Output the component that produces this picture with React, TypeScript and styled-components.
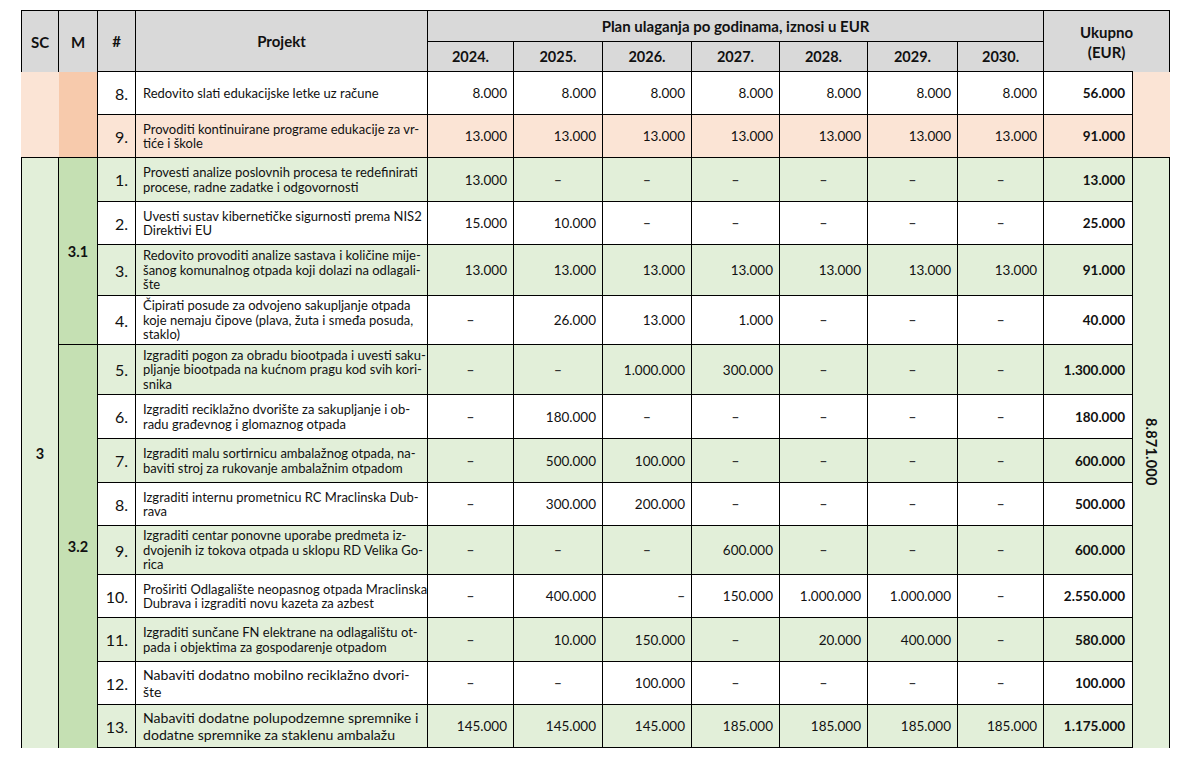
import React from "react";
import styled, { createGlobalStyle, css } from "styled-components";

const GlobalStyle = createGlobalStyle`
  html, body { margin: 0; padding: 0; background: #ffffff; }
  body { font-family: Lato, "Open Sans", sans-serif; color: #111; }
`;

const C = {
  head: "#d9d9d9",
  peach: "#fbe4d5",
  peachDark: "#f7caac",
  green: "#e2efd9",
  greenDark: "#c5e0b3",
  white: "#ffffff",
  line: "#000000",
};

type Tone = "white" | "peach" | "green";
const toneBg = (t: Tone) => (t === "peach" ? C.peach : t === "green" ? C.green : C.white);

const Page = styled.div`
  padding: 10px 0 0 21px;
`;

const Table = styled.table`
  border-collapse: separate;
  border-spacing: 0;
  table-layout: fixed;
  width: 1149px;
`;

const Col = styled.col<{ $w: number }>`
  width: ${(p) => p.$w}px;
`;

type Borders = { $l?: boolean; $t?: boolean; $r?: boolean; $b?: boolean };
const borders = css<Borders>`
  border-left: ${(p) => (p.$l ? `1px solid ${C.line}` : "none")};
  border-top: ${(p) => (p.$t ? `1px solid ${C.line}` : "none")};
  border-right: ${(p) => (p.$r ? `1px solid ${C.line}` : "none")};
  border-bottom: ${(p) => (p.$b ? `1px solid ${C.line}` : "none")};
`;

const Row = styled.tr<{ $h: number; $tone?: Tone }>`
  height: ${(p) => p.$h}px;
  background: ${(p) => toneBg(p.$tone ?? "white")};
`;

const HeadCell = styled.th<Borders & { $underline?: number; $small?: boolean }>`
  ${borders}
  box-sizing: border-box;
  background: ${C.head};
  font-weight: 700;
  font-size: ${(p) => (p.$small ? 14.5 : 15)}px;
  line-height: 20px;
  text-align: center;
  vertical-align: middle;
  padding: 0;
  ${(p) =>
    p.$underline
      ? css`
          background-image: linear-gradient(${C.line}, ${C.line});
          background-repeat: no-repeat;
          background-position: left bottom;
          background-size: ${p.$underline}px 1px;
        `
      : ""}
`;

const GroupCell = styled.td<Borders & { $bg: string }>`
  ${borders}
  background: ${(p) => p.$bg};
  font-weight: 700;
  font-size: 14.5px;
  text-align: center;
  vertical-align: middle;
  padding: 0;
`;

const IdxCell = styled.td`
  border-right: 1px solid ${C.line};
  border-bottom: 1px solid ${C.line};
  font-size: 16px;
  text-align: right;
  vertical-align: middle;
  padding: 0 7px 0 0;
`;

const ProjectCell = styled.td<{ $big?: boolean }>`
  border-right: 1px solid ${C.line};
  border-bottom: 1px solid ${C.line};
  font-size: ${(p) => (p.$big ? 14.1 : 13)}px;
  line-height: ${(p) => (p.$big ? 17 : 14.5)}px;
  text-align: left;
  vertical-align: middle;
  padding: 0 0 0 7px;
  white-space: nowrap;
  overflow: hidden;
`;

const Line = styled.span`
  display: block;
`;

const NumCell = styled.td<{ $center?: boolean; $dash?: boolean }>`
  border-right: 1px solid ${C.line};
  border-bottom: 1px solid ${C.line};
  font-size: 13.5px;
  font-weight: ${(p) => (p.$dash ? 700 : 400)};
  color: ${(p) => (p.$dash ? "#333" : "#111")};
  text-align: ${(p) => (p.$center ? "center" : "right")};
  vertical-align: middle;
  padding: ${(p) => (p.$center ? "0" : "0 6px 0 0")};
  white-space: nowrap;
`;

const SumCell = styled.td`
  border-right: 1px solid ${C.line};
  border-bottom: 1px solid ${C.line};
  font-size: 13.5px;
  font-weight: 700;
  text-align: right;
  vertical-align: middle;
  padding: 0 7px 0 0;
  white-space: nowrap;
`;

const GrandCell = styled.td<Borders & { $bg: string }>`
  ${borders}
  background: ${(p) => p.$bg};
  vertical-align: middle;
  text-align: center;
  padding: 0;
`;

const Vertical = styled.span`
  display: inline-block;
  writing-mode: vertical-rl;
  font-weight: 700;
  font-size: 14.5px;
  letter-spacing: 0.2px;
`;

type Item = {
  idx: string;
  lines: string[];
  vals: string[];
  sum: string;
  h: number;
  tone: Tone;
  big?: boolean;
  rightDash?: number[];
};

const D = "–";

const peachItems: Item[] = [
  {
    idx: "8.",
    lines: ["Redovito slati edukacijske letke uz račune"],
    vals: ["8.000", "8.000", "8.000", "8.000", "8.000", "8.000", "8.000"],
    sum: "56.000",
    h: 43,
    tone: "white",
  },
  {
    idx: "9.",
    lines: ["Provoditi kontinuirane programe edukacije za vr-", "tiće i škole"],
    vals: ["13.000", "13.000", "13.000", "13.000", "13.000", "13.000", "13.000"],
    sum: "91.000",
    h: 43,
    tone: "peach",
  },
];

const greenItems: Item[] = [
  {
    idx: "1.",
    lines: ["Provesti analize poslovnih procesa te redefinirati", "procese, radne zadatke i odgovornosti"],
    vals: ["13.000", D, D, D, D, D, D],
    sum: "13.000",
    h: 44,
    tone: "green",
  },
  {
    idx: "2.",
    lines: ["Uvesti sustav kibernetičke sigurnosti prema NIS2", "Direktivi EU"],
    vals: ["15.000", "10.000", D, D, D, D, D],
    sum: "25.000",
    h: 43,
    tone: "white",
  },
  {
    idx: "3.",
    lines: [
      "Redovito provoditi analize sastava i količine mije-",
      "šanog komunalnog otpada koji dolazi na odlagali-",
      "šte",
    ],
    vals: ["13.000", "13.000", "13.000", "13.000", "13.000", "13.000", "13.000"],
    sum: "91.000",
    h: 51,
    tone: "green",
  },
  {
    idx: "4.",
    lines: [
      "Čipirati posude za odvojeno sakupljanje otpada",
      "koje nemaju čipove (plava, žuta i smeđa posuda,",
      "staklo)",
    ],
    vals: [D, "26.000", "13.000", "1.000", D, D, D],
    sum: "40.000",
    h: 49,
    tone: "white",
  },
  {
    idx: "5.",
    lines: [
      "Izgraditi pogon za obradu biootpada i uvesti saku-",
      "pljanje biootpada na kućnom pragu kod svih kori-",
      "snika",
    ],
    vals: [D, D, "1.000.000", "300.000", D, D, D],
    sum: "1.300.000",
    h: 50,
    tone: "green",
  },
  {
    idx: "6.",
    lines: ["Izgraditi reciklažno dvorište za sakupljanje i ob-", "radu građevnog i glomaznog otpada"],
    vals: [D, "180.000", D, D, D, D, D],
    sum: "180.000",
    h: 44,
    tone: "white",
  },
  {
    idx: "7.",
    lines: ["Izgraditi malu sortirnicu ambalažnog otpada, na-", "baviti stroj za rukovanje ambalažnim otpadom"],
    vals: [D, "500.000", "100.000", D, D, D, D],
    sum: "600.000",
    h: 44,
    tone: "green",
  },
  {
    idx: "8.",
    lines: ["Izgraditi internu prometnicu RC Mraclinska Dub-", "rava"],
    vals: [D, "300.000", "200.000", D, D, D, D],
    sum: "500.000",
    h: 43,
    tone: "white",
  },
  {
    idx: "9.",
    lines: [
      "Izgraditi centar ponovne uporabe predmeta iz-",
      "dvojenih iz tokova otpada u sklopu RD Velika Go-",
      "rica",
    ],
    vals: [D, D, D, "600.000", D, D, D],
    sum: "600.000",
    h: 49,
    tone: "green",
  },
  {
    idx: "10.",
    lines: ["Proširiti Odlagalište neopasnog otpada Mraclinska", "Dubrava i izgraditi novu kazeta za azbest"],
    vals: [D, "400.000", D, "150.000", "1.000.000", "1.000.000", D],
    sum: "2.550.000",
    h: 43,
    tone: "white",
    rightDash: [2],
  },
  {
    idx: "11.",
    lines: ["Izgraditi sunčane FN elektrane na odlagalištu ot-", "pada i objektima za gospodarenje otpadom"],
    vals: [D, "10.000", "150.000", D, "20.000", "400.000", D],
    sum: "580.000",
    h: 44,
    tone: "green",
  },
  {
    idx: "12.",
    lines: ["Nabaviti dodatno mobilno reciklažno dvori-", "šte"],
    vals: [D, D, "100.000", D, D, D, D],
    sum: "100.000",
    h: 43,
    tone: "white",
    big: true,
  },
  {
    idx: "13.",
    lines: ["Nabaviti dodatne polupodzemne spremnike i", "dodatne spremnike za staklenu ambalažu"],
    vals: ["145.000", "145.000", "145.000", "185.000", "185.000", "185.000", "185.000"],
    sum: "1.175.000",
    h: 43,
    tone: "green",
    big: true,
  },
];

const widths = [38, 39, 38, 292, 86, 89, 89, 88, 88, 90, 86, 89, 37];
const years = ["2024.", "2025.", "2026.", "2027.", "2028.", "2029.", "2030."];

const ItemCells: React.FC<{ item: Item }> = ({ item }) => (
  <>
    <IdxCell>{item.idx}</IdxCell>
    <ProjectCell $big={item.big}>
      {item.lines.map((l, i) => (
        <Line key={i}>{l}</Line>
      ))}
    </ProjectCell>
    {item.vals.map((v, i) => (
      <NumCell
        key={i}
        $dash={v === D}
        $center={v === D && !(item.rightDash ?? []).includes(i)}
      >
        {v}
      </NumCell>
    ))}
    <SumCell>{item.sum}</SumCell>
  </>
);

export default function App() {
  return (
    <>
      <GlobalStyle />
      <Page>
        <Table>
          <colgroup>
            {widths.map((w, i) => (
              <Col key={i} $w={w} />
            ))}
          </colgroup>
          <thead>
            <Row $h={32}>
              <HeadCell rowSpan={2} $l $t $r>
                SC
              </HeadCell>
              <HeadCell rowSpan={2} $t $r>
                M
              </HeadCell>
              <HeadCell rowSpan={2} $t $r $b>
                #
              </HeadCell>
              <HeadCell rowSpan={2} $t $r $b>
                Projekt
              </HeadCell>
              <HeadCell colSpan={7} $t $r $b>
                Plan ulaganja po godinama, iznosi u EUR
              </HeadCell>
              <HeadCell rowSpan={2} colSpan={2} $t $r $underline={89}>
                Ukupno
                <br />
                (EUR)
              </HeadCell>
            </Row>
            <Row $h={30}>
              {years.map((y) => (
                <HeadCell key={y} $r $b $small>
                  {y}
                </HeadCell>
              ))}
            </Row>
          </thead>
          <tbody>
            {peachItems.map((item, i) => (
              <Row key={`p${i}`} $h={item.h} $tone={item.tone}>
                {i === 0 && (
                  <>
                    <GroupCell rowSpan={2} $bg={C.peach} $b />
                    <GroupCell rowSpan={2} $bg={C.peachDark} $r $b />
                  </>
                )}
                <ItemCells item={item} />
                {i === 0 && <GrandCell rowSpan={2} $bg={C.peach} $b />}
              </Row>
            ))}
            {greenItems.map((item, i) => (
              <Row key={`g${i}`} $h={item.h} $tone={item.tone}>
                {i === 0 && (
                  <GroupCell rowSpan={13} $bg={C.green} $l $r>
                    3
                  </GroupCell>
                )}
                {i === 0 && (
                  <GroupCell rowSpan={4} $bg={C.greenDark} $r $b>
                    3.1
                  </GroupCell>
                )}
                {i === 4 && (
                  <GroupCell rowSpan={9} $bg={C.greenDark} $r>
                    3.2
                  </GroupCell>
                )}
                <ItemCells item={item} />
                {i === 0 && (
                  <GrandCell rowSpan={13} $bg={C.green} $r>
                    <Vertical>8.871.000</Vertical>
                  </GrandCell>
                )}
              </Row>
            ))}
          </tbody>
        </Table>
      </Page>
    </>
  );
}
